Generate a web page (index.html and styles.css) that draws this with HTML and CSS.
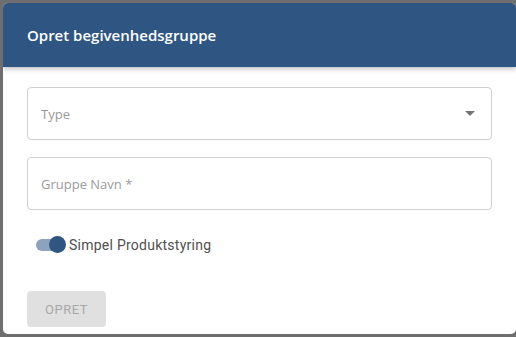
FILE: index.html
```html
<!DOCTYPE html>
<html lang="da">
<head>
<meta charset="utf-8">
<link rel="stylesheet" href="styles.css">
</head>
<body>
<div class="dialog">
  <div class="header"><h1 class="title">Opret begivenhedsgruppe</h1></div>
  <div class="content">
    <div class="field select">
      <span class="placeholder">Type</span>
      <svg class="arrow" width="10" height="5" viewBox="0 0 10 5"><path d="M0 0h10L5 5z" fill="#757575"/></svg>
    </div>
    <div class="field">
      <span class="placeholder">Gruppe Navn *</span>
    </div>
    <label class="toggle-row">
      <span class="switch"><span class="track"></span><span class="thumb"></span></span>
      <span class="toggle-label">Simpel Produktstyring</span>
    </label>
    <div class="actions">
      <button class="btn" disabled>OPRET</button>
    </div>
  </div>
</div>
</body>
</html>
```
FILE: styles.css
```css
html, body {
  margin: 0;
  padding: 0;
  height: 100%;
  overflow: hidden;
}
body {
  background: #6e6e6e;
  padding: 3px 0 0 3px;
  box-sizing: border-box;
}
.dialog {
  width: 513px;
  height: 331px;
  background: #fff;
  border-radius: 5px;
  overflow: hidden;
  display: flex;
  flex-direction: column;
}
.header {
  background: #2f5683;
  height: 64px;
  display: flex;
  align-items: center;
  padding-left: 24px;
  box-shadow: 0 2px 5px rgba(0,0,0,0.25);
  position: relative;
  z-index: 1;
}
.title {
  margin: 0;
  color: #fff;
  font-family: "Open Sans", sans-serif;
  font-weight: 600;
  font-size: 15px;
  letter-spacing: 0;
}
.content {
  padding: 20px 24px 0 24px;
  display: flex;
  flex-direction: column;
}
.field {
  width: 465px;
  height: 53px;
  box-sizing: border-box;
  border: 1px solid #cfcfcf;
  border-radius: 4px;
  display: flex;
  align-items: center;
  padding: 0 13px;
  margin-bottom: 17px;
}
.select {
  justify-content: space-between;
}
.arrow {
  margin-right: 3px;
}
.placeholder {
  font-family: "Open Sans", sans-serif;
  font-size: 13px;
  color: #9a9a9a;
}
.toggle-row {
  display: flex;
  align-items: center;
  height: 20px;
  margin-top: 8px;
  padding-left: 9px;
}
.switch {
  position: relative;
  width: 30px;
  height: 20px;
  display: inline-block;
}
.track {
  position: absolute;
  left: 0;
  top: 4px;
  width: 26px;
  height: 12px;
  border-radius: 6px;
  background: #8da2bd;
}
.thumb {
  position: absolute;
  left: 13px;
  top: 1px;
  width: 17px;
  height: 17px;
  border-radius: 50%;
  background: #2f5683;
}
.toggle-label {
  font-family: Roboto, sans-serif;
  font-size: 14px;
  letter-spacing: 0.25px;
  color: #505050;
  margin-left: 3px;
}
.actions {
  margin-top: 36px;
}
.btn {
  width: 79px;
  height: 36px;
  border: none;
  border-radius: 4px;
  background: #e0e0e0;
  color: #a8a8a8;
  font-family: Roboto, sans-serif;
  font-size: 13px;
  letter-spacing: 0.5px;
}
```
